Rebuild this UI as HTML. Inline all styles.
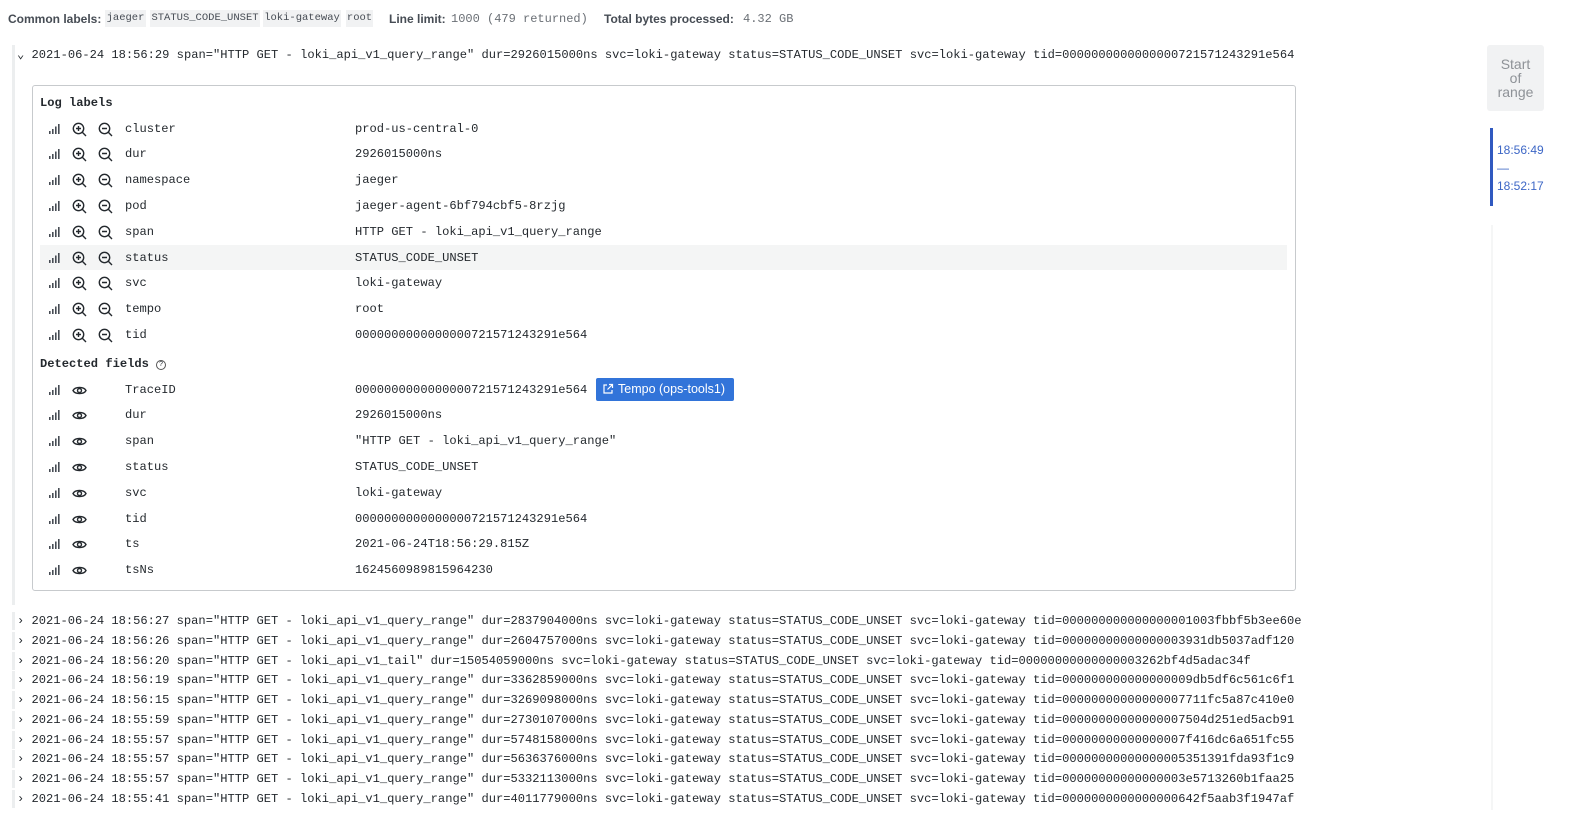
<!DOCTYPE html>
<html><head><meta charset="utf-8"><style>
*{margin:0;padding:0;box-sizing:border-box}
body{width:1585px;height:822px;background:#fff;position:relative;overflow:hidden;font-family:"Liberation Sans",sans-serif;color:#24292e}
.m{font-family:"Liberation Mono",monospace;font-size:12.1px;white-space:pre;color:#24292e}
.abs{position:absolute}
.hl{position:absolute;top:12px;font-size:12px;color:#464c54;font-weight:bold;white-space:nowrap}
.hv{position:absolute;top:12px;font-family:"Liberation Mono",monospace;font-size:12px;color:#6a6f75;white-space:pre}
.tag{position:absolute;top:10px;height:17px;line-height:17px;text-align:center;font-family:"Liberation Mono",monospace;font-size:10.5px;background:#f1f2f3;color:#464c54;white-space:nowrap}
.line{left:17px;height:20px;line-height:20px}
.bar{position:absolute;left:12px;width:3px;background:#eceeef}
.row{position:absolute;left:40px;width:1247px;height:25px;line-height:25px}
.row svg{position:absolute;top:6px}
.row .k{position:absolute;left:85px}
.row .v{position:absolute;left:315px}
.sec{position:absolute;left:40px;font-family:"Liberation Mono",monospace;font-size:12.1px;font-weight:bold;color:#24292e}
</style></head><body>
<div class="hl" style="left:8px">Common labels:</div>
<span class="tag" style="left:105px;width:41px">jaeger</span><span class="tag" style="left:150px;width:110px">STATUS_CODE_UNSET</span><span class="tag" style="left:263px;width:78px">loki-gateway</span><span class="tag" style="left:346px;width:27px">root</span>
<div class="hl" style="left:389px">Line limit:</div><div class="hv" style="left:451px">1000 (479 returned)</div>
<div class="hl" style="left:604px">Total bytes processed:</div><div class="hv" style="left:743px">4.32 GB</div>

<div class="bar" style="top:45px;height:560px"></div>
<div class="abs m line" style="top:45px">⌄ 2021-06-24 18:56:29 span="HTTP GET - loki_api_v1_query_range" dur=2926015000ns svc=loki-gateway status=STATUS_CODE_UNSET svc=loki-gateway tid=0000000000000000721571243291e564</div>

<div class="abs" style="left:32px;top:85px;width:1264px;height:506px;border:1px solid #c7cacd;border-radius:3px"></div>
<div class="sec" style="top:96px">Log labels</div>
<div class="abs" style="left:40px;top:245px;width:1247px;height:25px;background:#f4f5f5"></div>
<div id="rows"></div>
<div class="sec" style="top:357px">Detected fields <span style="display:inline-block;width:10px;height:10px;border:1px solid #555;border-radius:50%;font-size:7px;line-height:8px;text-align:center;font-weight:normal;vertical-align:1px">?</span></div>
<div class="abs" style="left:596px;top:378px;width:138px;height:23px;background:#3274d9;border-radius:2px;color:#fff;font-size:12.5px;line-height:23px;padding-left:6px"><svg width="12" height="12" viewBox="0 0 12 12" style="vertical-align:-2px;margin-right:4px"><path d="M5 2H2v8h8V7M7 1.5h3.5V5M10.5 1.5L5.5 6.5" fill="none" stroke="#fff" stroke-width="1.2"/></svg>Tempo (ops-tools1)</div>

<div class="abs" style="left:1487px;top:45px;width:57px;height:66px;background:#f1f2f3;border-radius:3px;color:#8e9297;font-size:14px;line-height:14px;text-align:center;padding-top:12px">Start<br>of<br>range</div>
<div class="abs" style="left:1490px;top:128px;width:3px;height:78px;background:#3059c0"></div>
<div class="abs" style="left:1497px;top:141px;color:#3d67c6;font-size:12px;line-height:18px">18:56:49<br>—<br>18:52:17</div>
<div class="abs" style="left:1491px;top:225px;width:2px;height:585px;background:#f5f6f6"></div>

<div id="lines"></div>
<script>
const bar='<svg width="12" height="12" viewBox="0 0 12 12"><rect x="1" y="8" width="1.6" height="3" fill="#464c54"/><rect x="4" y="6" width="1.6" height="5" fill="#464c54"/><rect x="7" y="3.5" width="1.6" height="7.5" fill="#464c54"/><rect x="10" y="1" width="1.6" height="10" fill="#464c54"/></svg>';
const zi='<svg width="15" height="15" viewBox="0 0 15 15"><circle cx="6.5" cy="6.5" r="5.2" fill="none" stroke="#24292e" stroke-width="1.4"/><path d="M10.3 10.3L14 14M4 6.5h5M6.5 4v5" stroke="#24292e" stroke-width="1.4"/></svg>';
const zo='<svg width="15" height="15" viewBox="0 0 15 15"><circle cx="6.5" cy="6.5" r="5.2" fill="none" stroke="#24292e" stroke-width="1.4"/><path d="M10.3 10.3L14 14M4 6.5h5" stroke="#24292e" stroke-width="1.4"/></svg>';
const eye='<svg width="15" height="13" viewBox="0 0 15 13"><path d="M1 6.5C3 2.5 12 2.5 14 6.5C12 10.5 3 10.5 1 6.5Z" fill="none" stroke="#24292e" stroke-width="1.4"/><circle cx="7.5" cy="6.5" r="2" fill="none" stroke="#24292e" stroke-width="1.4"/></svg>';
let h='';
const L=[["cluster","prod-us-central-0"],["dur","2926015000ns"],["namespace","jaeger"],["pod","jaeger-agent-6bf794cbf5-8rzjg"],["span","HTTP GET - loki_api_v1_query_range"],["status","STATUS_CODE_UNSET"],["svc","loki-gateway"],["tempo","root"],["tid","0000000000000000721571243291e564"]];
L.forEach((r,i)=>{h+=`<div class="row m" style="top:${116.5+i*25.8}px"><span style="position:absolute;left:8px;top:0">${bar}</span><span style="position:absolute;left:32px;top:-1px">${zi}</span><span style="position:absolute;left:58px;top:-1px">${zo}</span><span class="k">${r[0]}</span><span class="v">${r[1]}</span></div>`});
const D=[["TraceID","0000000000000000721571243291e564"],["dur","2926015000ns"],["span","\"HTTP GET - loki_api_v1_query_range\""],["status","STATUS_CODE_UNSET"],["svc","loki-gateway"],["tid","0000000000000000721571243291e564"],["ts","2021-06-24T18:56:29.815Z"],["tsNs","1624560989815964230"]];
D.forEach((r,i)=>{h+=`<div class="row m" style="top:${377.5+i*25.8}px"><span style="position:absolute;left:8px;top:0">${bar}</span><span style="position:absolute;left:32px;top:0">${eye}</span><span class="k">${r[0]}</span><span class="v">${r[1]}</span></div>`});
document.getElementById('rows').innerHTML=h;
const Q=[["18:56:27",'span="HTTP GET - loki_api_v1_query_range" dur=2837904000ns',"000000000000000001003fbbf5b3ee60e"],["18:56:26",'span="HTTP GET - loki_api_v1_query_range" dur=2604757000ns',"00000000000000003931db5037adf120"],["18:56:20",'span="HTTP GET - loki_api_v1_tail" dur=15054059000ns',"00000000000000003262bf4d5adac34f"],["18:56:19",'span="HTTP GET - loki_api_v1_query_range" dur=3362859000ns',"000000000000000009db5df6c561c6f1"],["18:56:15",'span="HTTP GET - loki_api_v1_query_range" dur=3269098000ns',"00000000000000007711fc5a87c410e0"],["18:55:59",'span="HTTP GET - loki_api_v1_query_range" dur=2730107000ns',"00000000000000007504d251ed5acb91"],["18:55:57",'span="HTTP GET - loki_api_v1_query_range" dur=5748158000ns',"00000000000000007f416dc6a651fc55"],["18:55:57",'span="HTTP GET - loki_api_v1_query_range" dur=5636376000ns',"00000000000000005351391fda93f1c9"],["18:55:57",'span="HTTP GET - loki_api_v1_query_range" dur=5332113000ns',"00000000000000003e5713260b1faa25"],["18:55:41",'span="HTTP GET - loki_api_v1_query_range" dur=4011779000ns',"0000000000000000642f5aab3f1947af"]];
let g='';
Q.forEach((q,i)=>{const t=611+i*19.75;g+=`<div class="bar" style="top:${t+1}px;height:18px"></div><div class="abs m line" style="top:${t}px">› 2021-06-24 ${q[0]} ${q[1]} svc=loki-gateway status=STATUS_CODE_UNSET svc=loki-gateway tid=${q[2]}</div>`});
document.getElementById('lines').innerHTML=g;
</script>
</body></html>
